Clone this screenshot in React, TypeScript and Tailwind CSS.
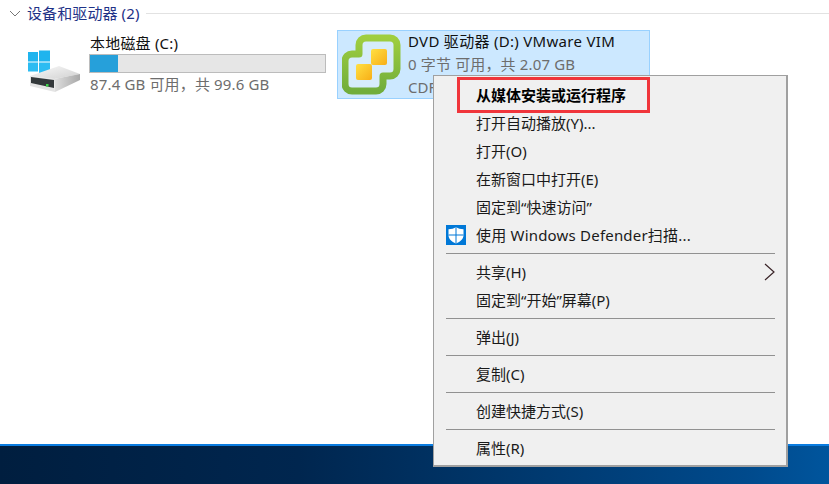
const FONT = "font-['Noto_Sans','Noto_Sans_CJK_SC',sans-serif]";

type MenuEntry =
  | { type: "sep" }
  | { type: "item"; label: string; bold?: boolean; shield?: boolean; arrow?: boolean };

const MENU: MenuEntry[] = [
  { type: "item", label: "从媒体安装或运行程序", bold: true },
  { type: "item", label: "打开自动播放(Y)..." },
  { type: "item", label: "打开(O)" },
  { type: "item", label: "在新窗口中打开(E)" },
  { type: "item", label: "固定到“快速访问”" },
  { type: "item", label: "使用 Windows Defender扫描...", shield: true },
  { type: "sep" },
  { type: "item", label: "共享(H)", arrow: true },
  { type: "item", label: "固定到“开始”屏幕(P)" },
  { type: "sep" },
  { type: "item", label: "弹出(J)" },
  { type: "sep" },
  { type: "item", label: "复制(C)" },
  { type: "sep" },
  { type: "item", label: "创建快捷方式(S)" },
  { type: "sep" },
  { type: "item", label: "属性(R)" },
];

function DriveIcon() {
  return (
    <svg width="56" height="48" viewBox="7 8 56 48" className="shrink-0">
      <defs>
        <linearGradient id="top" x1="0" y1="0" x2="1" y2="1">
          <stop offset="0" stopColor="#fafafa" />
          <stop offset="1" stopColor="#d0d0d0" />
        </linearGradient>
        <linearGradient id="side" x1="0" y1="0" x2="1" y2="0">
          <stop offset="0" stopColor="#e0e0e0" />
          <stop offset="1" stopColor="#a8a8a8" />
        </linearGradient>
      </defs>
      <rect x="7" y="10" width="10" height="9.5" fill="#1fb4ee" />
      <rect x="18" y="8.5" width="11" height="11" fill="#1fb4ee" />
      <rect x="7" y="20.5" width="10" height="9" fill="#2cbcf2" />
      <rect x="18" y="20.5" width="11" height="10.5" fill="#2cbcf2" />
      <path d="M9 34 L38 24 L59 32 L33 37 Z" fill="url(#top)" />
      <path d="M33 37 L59 32 L59 38 L34 50 Z" fill="url(#side)" />
      <path d="M9 34 L33 37 L34 50 L9 44 Z" fill="#e4e4e4" />
      <path d="M10 35 L33 38 L33 46 L10 41 Z" fill="#33383a" />
      <rect x="25" y="42" width="2.5" height="2.5" fill="#3fd24a" />
    </svg>
  );
}

function VmwareIcon() {
  return (
    <svg width="62" height="62" viewBox="6 5 62 62" className="shrink-0">
      <defs>
        <linearGradient id="vm" x1="0" y1="0" x2="0" y2="1">
          <stop offset="0" stopColor="#9fce3f" />
          <stop offset="1" stopColor="#71ad3c" />
        </linearGradient>
        <linearGradient id="yl" x1="0" y1="0" x2="1" y2="1">
          <stop offset="0" stopColor="#ffe043" />
          <stop offset="1" stopColor="#f8ae16" />
        </linearGradient>
      </defs>
      <path
        d="M23 25 V16 A7 7 0 0 1 30 9 H54 A7 7 0 0 1 61 16 V40 A7 7 0 0 1 54 47 H47 V55 A7 7 0 0 1 40 62 H16 A7 7 0 0 1 9 55 V32 A7 7 0 0 1 16 25 Z"
        fill="#d6ecfb"
        stroke="url(#vm)"
        strokeWidth="7"
        strokeLinejoin="round"
      />
      <rect x="35" y="20" width="16" height="16" rx="2" fill="url(#yl)" />
      <rect x="20" y="35" width="16" height="16" rx="2" fill="url(#yl)" />
    </svg>
  );
}

function ShieldIcon() {
  return (
    <svg width="20" height="20" viewBox="0 0 20 20" className="shrink-0">
      <rect width="20" height="20" fill="#0078d7" />
      <path d="M10 2 C12 3.6 14.6 4.2 17.5 4.2 V10 C17.5 14 14.5 16.6 10 18.4 C5.5 16.6 2.5 14 2.5 10 V4.2 C5.4 4.2 8 3.6 10 2 Z" fill="#fff" />
      <rect x="9.5" y="2" width="1" height="16.5" fill="#0078d7" />
      <rect x="2.5" y="9.5" width="15" height="1" fill="#0078d7" />
    </svg>
  );
}

function ContextMenu() {
  return (
    <div className="absolute left-[433px] top-[75px] w-[355px] border border-r-2 border-b-2 border-[#a0a0a0] bg-[#f0f0f0] pt-[5px] pb-[3px] text-[15px] text-[#1a1a1a]">
      {/* red marker drawn on top of the first row */}
      <div className="absolute left-[23px] top-[1px] h-[36px] w-[193px] border-[3px] border-[#f0353b]" />
      {MENU.map((entry, i) =>
        entry.type === "sep" ? (
          <div key={i} className="ml-[12px] mr-[11px] my-[4px] h-px bg-[#919191]" />
        ) : (
          <div key={i} className="flex h-[28px] items-center">
            <div className="flex w-[42px] justify-end pr-[2px]">
              <div className="w-[28px]">{entry.shield && <ShieldIcon />}</div>
            </div>
            <span className={entry.bold ? "font-bold text-black" : entry.shield ? "tracking-[0.2px]" : ""}>
              {entry.label}
            </span>
            {entry.arrow && (
              <svg width="11" height="18" viewBox="0 0 11 18" className="ml-auto mr-[11px]">
                <path d="M1 1 L10 9 L1 17" fill="none" stroke="#3a2428" strokeWidth="1.2" />
              </svg>
            )}
          </div>
        ),
      )}
    </div>
  );
}

export default function App() {
  return (
    <div className={`relative flex h-[484px] w-[829px] flex-col overflow-hidden bg-white ${FONT}`}>
      <div className="flex-1">
        <div className="flex h-[30px] items-center pb-[3px] pl-[9px]">
          <svg width="12" height="8" viewBox="0 0 12 8">
            <path d="M1 1 L6 6 L11 1" fill="none" stroke="#777" strokeWidth="1" />
          </svg>
          <span className="ml-[6px] text-[15px] tracking-[0.1px] text-[#1e3287]">设备和驱动器 (2)</span>
          <div className="ml-[7px] h-px flex-1 bg-[#e2e2e2]" />
        </div>

        <div className="flex pl-[27px]">
          <div className="flex w-[310px] pt-[3px]">
            <div className="mt-[17px] ml-[1px]">
              <DriveIcon />
            </div>
            <div className="ml-[5px] flex-1">
              <div className="ml-[1px] h-[21px] text-[15px] leading-[20px] tracking-[0.2px] text-[#111]">本地磁盘 (C:)</div>
              <div className="h-[19px] w-[237px] border border-[#bcbcbc] bg-[#e6e6e6]">
                <div className="h-full w-[28px] bg-[#26a0da]" />
              </div>
              <div className="mt-[1px] ml-[1px] text-[15px] leading-[20px] tracking-[0.15px] text-[#6d6d6d]">87.4 GB 可用，共 99.6 GB</div>
            </div>
          </div>

          <div className="flex h-[69px] w-[313px] items-center border border-[#99d1ff] bg-[#cce8ff] pl-[4px]">
            <VmwareIcon />
            <div className="ml-[4px]">
              <div className="text-[15px] leading-[23px] tracking-[0.3px] text-[#111]">DVD 驱动器 (D:) VMware VIM</div>
              <div className="text-[15px] leading-[23px] tracking-[0.15px] text-[#6d6d6d]">0 字节 可用，共 2.07 GB</div>
              <div className="text-[15px] leading-[23px] text-[#6d6d6d]">CDFS</div>
            </div>
          </div>
        </div>
      </div>

      <div className="h-[40px] border-t-2 border-[#0a7ce0] bg-[linear-gradient(to_right,#001e3f_0%,#00264f_36%,#004a8c_90%,#00559d_100%)]" />

      <ContextMenu />
    </div>
  );
}
